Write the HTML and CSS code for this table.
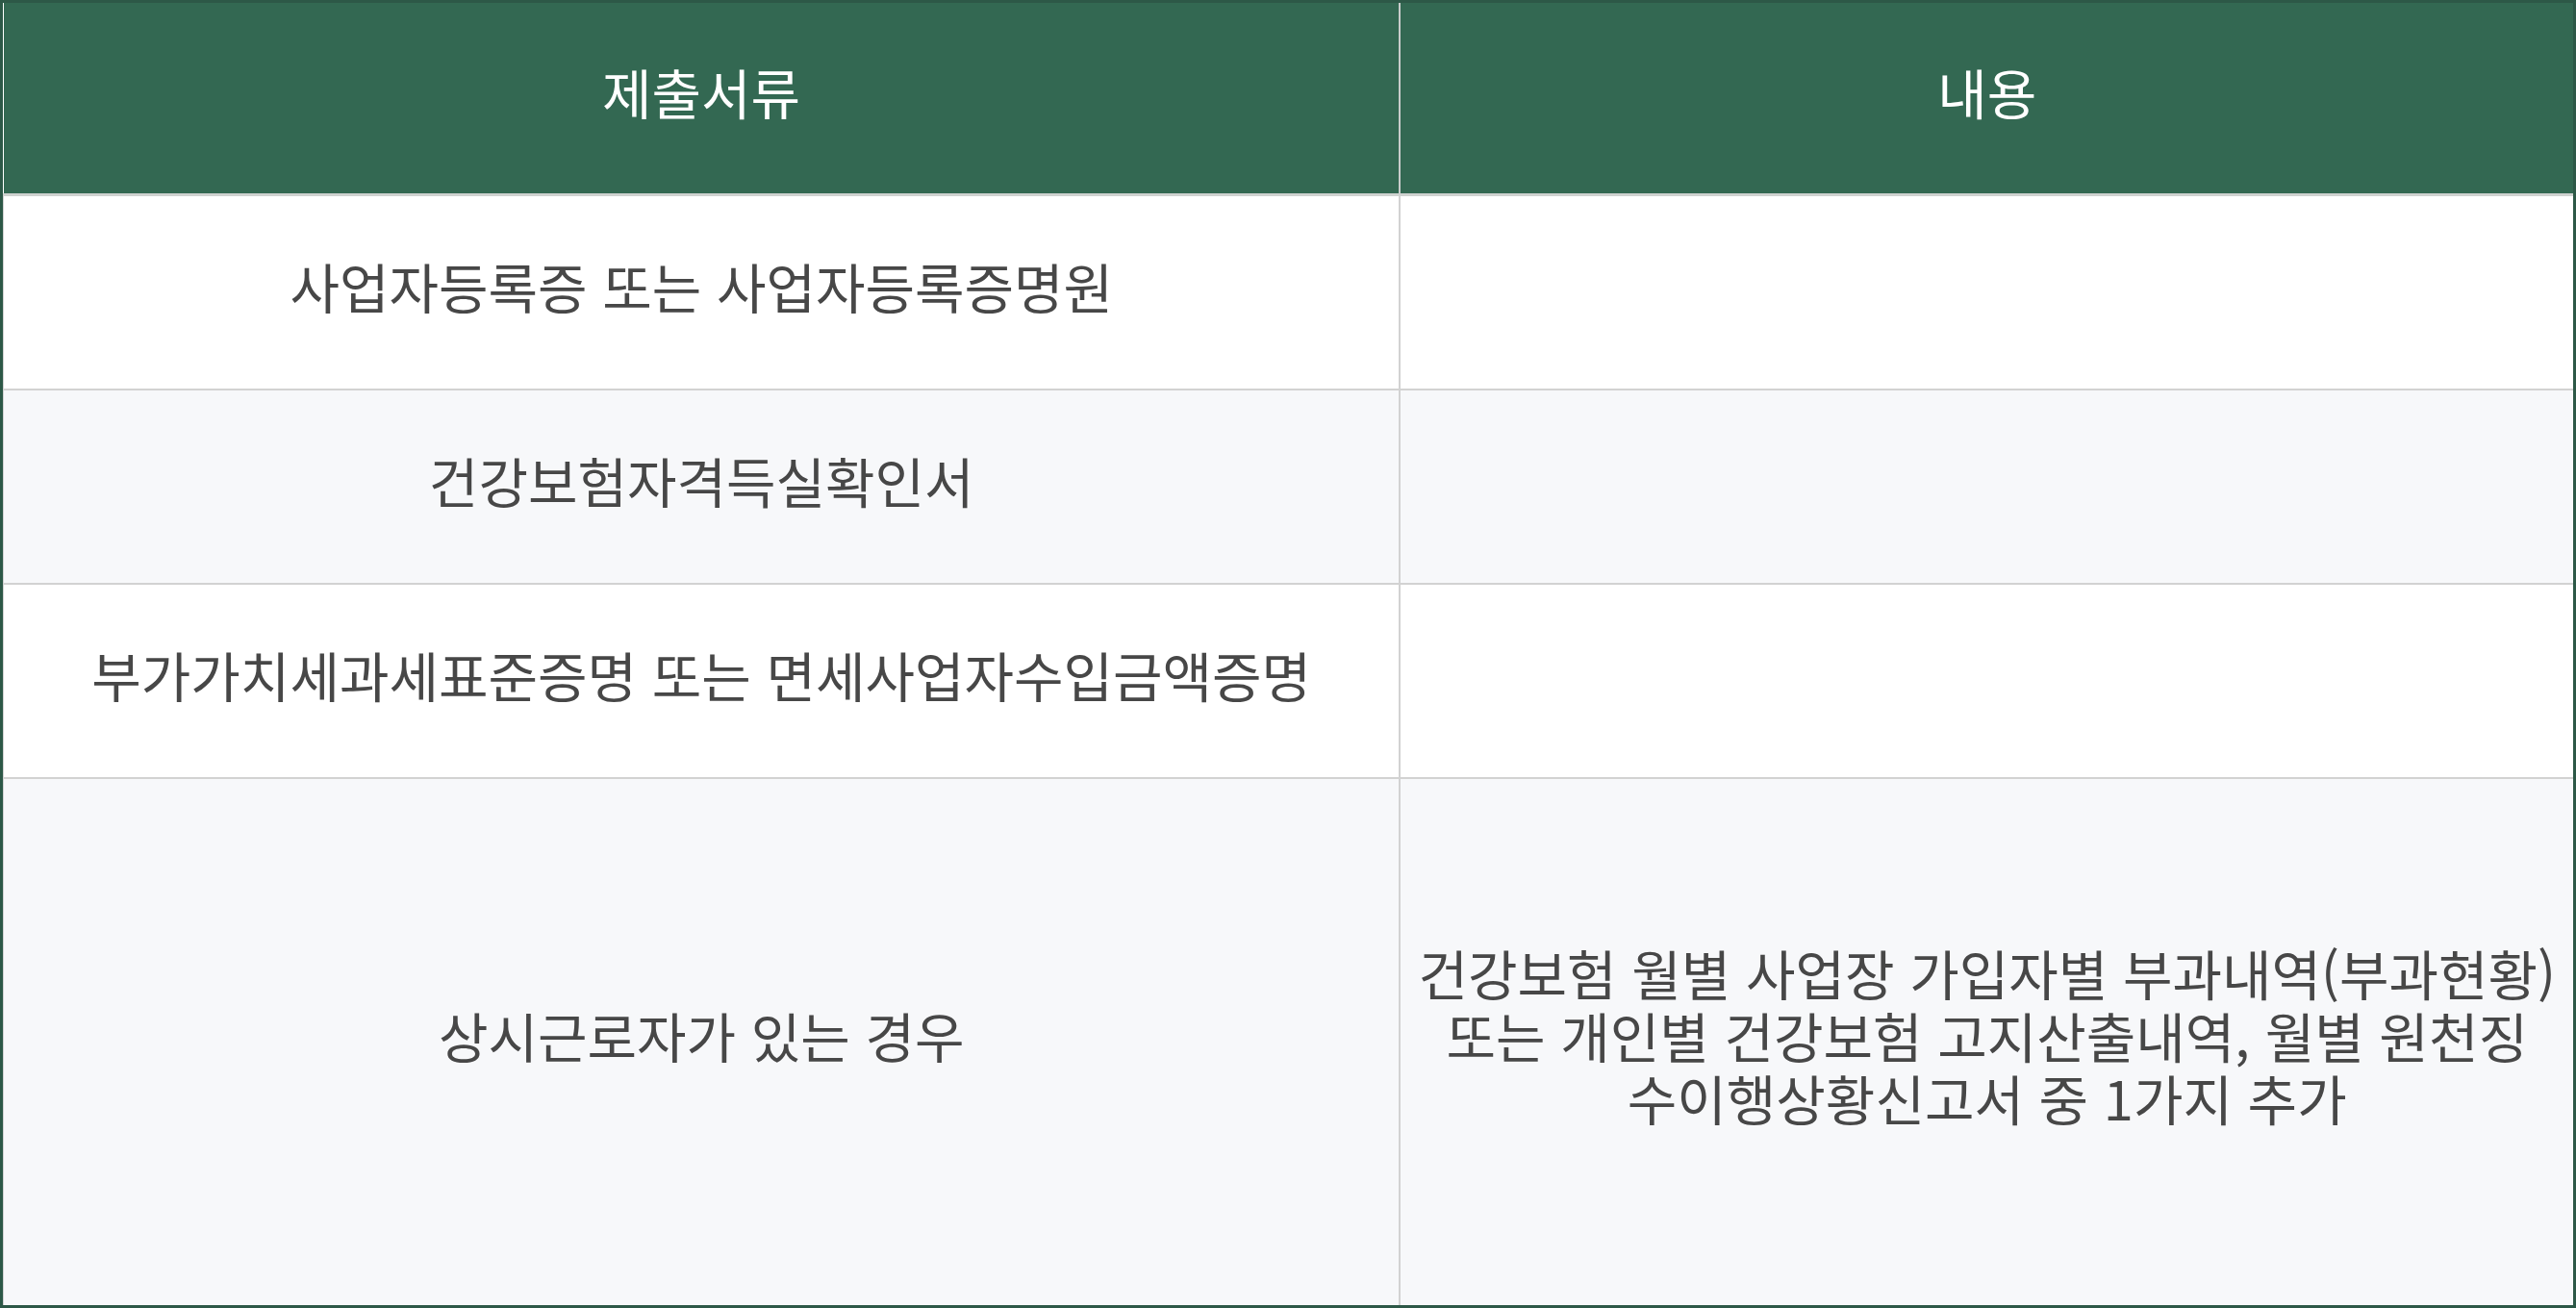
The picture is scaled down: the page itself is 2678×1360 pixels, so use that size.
FILE: index.html
```html
<!DOCTYPE html>
<html lang="ko">
<head>
    <meta charset="UTF-8">
    <meta name="viewport" content="width=device-width, initial-scale=1.0">
    <title>제출서류</title>
    <link rel="stylesheet" href="styles.css">
</head>
<body>
    <div class="table-wrap">
        <table class="docs">
            <colgroup>
                <col class="col-doc">
                <col class="col-desc">
            </colgroup>
            <thead>
                <tr>
                    <th>제출서류</th>
                    <th>내용</th>
                </tr>
            </thead>
            <tbody>
                <tr>
                    <td>사업자등록증 또는 사업자등록증명원</td>
                    <td></td>
                </tr>
                <tr class="alt">
                    <td>건강보험자격득실확인서</td>
                    <td></td>
                </tr>
                <tr>
                    <td>부가가치세과세표준증명 또는 면세사업자수입금액증명</td>
                    <td></td>
                </tr>
                <tr class="alt tall">
                    <td>상시근로자가 있는 경우</td>
                    <td>건강보험 월별 사업장 가입자별 부과내역(부과현황)<br>또는 개인별 건강보험 고지산출내역, 월별 원천징<br>수이행상황신고서 중 1가지 추가</td>
                </tr>
            </tbody>
        </table>
    </div>
</body>
</html>
```

FILE: styles.css
```css
body {
    margin: 0;
    font-family: "Noto Sans CJK KR", "Noto Sans", sans-serif;
    background: #ffffff;
}

.table-wrap {
    border: 3px solid #2d5847;
    height: 1354px;
}

.docs {
    width: 100%;
    height: 100%;
    border-collapse: collapse;
    table-layout: fixed;
}

.col-doc {
    width: 54.35%;
}

.docs th {
    height: 182px;
    padding: 0 0 16px;
    background-color: #336852;
    color: #ffffff;
    font-size: 56px;
    font-weight: 400;
    border-left: 2px solid #c9cccb;
    border-bottom: 3px solid #cfd2d0;
}

.docs th:first-child {
    border-left: none;
}

.docs td {
    height: 184px;
    padding: 0 10px 16px;
    color: #474747;
    font-size: 56px;
    line-height: 65px;
    text-align: center;
    white-space: nowrap;
    border: 2px solid #d2d2d2;
}

.docs tr.alt td {
    background-color: #f7f8fa;
}

.docs tr.tall td {
    height: auto;
}

/* keep the gray lines inside the dark frame */
.docs td:first-child {
    border-left: 1px solid #d2d2d2;
}

.docs td:last-child {
    border-right: none;
}

.docs tr:last-child td {
    border-bottom: none;
}
```
